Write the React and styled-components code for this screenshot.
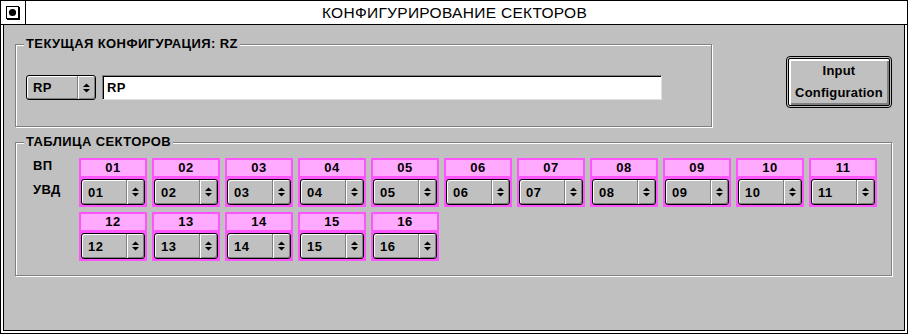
import styled, { createGlobalStyle } from "styled-components";

const GlobalStyle = createGlobalStyle`
    html, body {
        margin: 0;
        padding: 0;
        background: #c0c0c0;
    }
    * {
        box-sizing: border-box;
    }
`

const Window = styled.div`
    width: 908px;
    height: 334px;
    border: 1px solid #000;
    background: #fff;
    display: flex;
    flex-direction: column;
    font-family: "Liberation Sans", Arial, sans-serif;
    color: #000;
`
const TitleBar = styled.div`
    height: 24px;
    flex: none;
    display: flex;
    border-bottom: 1px solid #000;
    background: #fff;
`
const CloseBox = styled.div`
    width: 25px;
    border-right: 1px solid #000;
    display: flex;
    align-items: center;
    justify-content: center;
    padding-right: 1px;
`
const Title = styled.div`
    flex: 1;
    text-align: center;
    font-size: 15.5px;
    letter-spacing: 0.3px;
    line-height: 23px;
    padding-right: 24px;
`
const Frame = styled.div`
    flex: 1;
    border: 2px solid #fff;
    border-top: none;
    display: flex;
`
const Body = styled.div`
    flex: 1;
    border: 1px solid #000;
    border-top: none;
    background: #c0c0c0;
    padding: 19px 12px 0 11px;
`
const TopRow = styled.div`
    display: flex;
    justify-content: space-between;
    align-items: flex-start;
`
const Group = styled.div`
    position: relative;
    width: ${p => p.$w}px;
    height: ${p => p.$h}px;
    margin-top: ${p => p.$top || 0}px;
    border: 1px solid #808080;
    box-shadow: inset 1px 1px 0 #fff, 1px 1px 0 #fff;
    padding: ${p => p.$pad};
`
const Legend = styled.span`
    position: absolute;
    left: 8px;
    top: -9px;
    padding: 0 2px;
    background: #c0c0c0;
    font-size: 13px;
    font-weight: bold;
    letter-spacing: 0.4px;
    line-height: 16px;
`
const ConfigRow = styled.div`
    display: flex;
    gap: 6px;
`
const Spinner = styled.div`
    width: ${p => p.$w}px;
    height: ${p => p.$h}px;
    display: flex;
    border: 1px solid #000;
    border-radius: 3px;
    background: #c0c0c0;
    box-shadow: inset 1px 1px 0 #fff, inset -1px -1px 0 #808080;
    overflow: hidden;
`
const SpinValue = styled.div`
    flex: 1;
    display: flex;
    align-items: center;
    padding-left: ${p => p.$pad || 5}px;
    font-size: 13px;
    font-weight: bold;
    letter-spacing: 0.4px;
`
const SpinArrows = styled.div`
    width: 18px;
    display: flex;
    align-items: center;
    justify-content: center;
    border-left: 1px solid #808080;
    box-shadow: inset 1px 0 0 #fff, inset -1px -1px 0 #808080;
`
const TextField = styled.div`
    width: 560px;
    height: 25px;
    background: #fff;
    border: 1px solid;
    border-color: #808080 #dfdfdf #dfdfdf #808080;
    box-shadow: inset 1px 1px 0 #000;
    padding-left: 4px;
    display: flex;
    align-items: center;
    font-size: 13px;
    font-weight: bold;
    letter-spacing: 0.4px;
`
const ButtonOuter = styled.div`
    width: 106px;
    height: 52px;
    margin-top: 12px;
    border: 1px solid #000;
    border-radius: 4px;
    padding: 1px;
    background: #c0c0c0;
    display: flex;
`
const ButtonFace = styled.div`
    flex: 1;
    border: 1px solid #000;
    border-radius: 2px;
    box-shadow: inset 2px 2px 0 #fff, inset -2px -2px 0 #808080;
    display: flex;
    flex-direction: column;
    align-items: center;
    justify-content: center;
    font-size: 13px;
    font-weight: bold;
    letter-spacing: 0.2px;
    line-height: 22px;
    padding-bottom: 1px;
`
const TableBody = styled.div`
    display: flex;
`
const Labels = styled.div`
    width: 46px;
    display: flex;
    flex-direction: column;
    font-size: 13px;
    font-weight: bold;
    letter-spacing: 0.4px;
    line-height: 16px;
`
const RowLabel = styled.div`
    margin-top: ${p => p.$top || 0}px;
`
const Grid = styled.div`
    display: grid;
    grid-template-columns: repeat(11, 68px);
    gap: 5px;
`
const Cell = styled.div`
    height: 49px;
    background: #ff55ff;
    padding: 2px;
    display: flex;
    flex-direction: column;
    gap: 3px;
`
const CellHead = styled.div`
    height: 16px;
    background: #ffaaff;
    text-align: center;
    font-size: 13px;
    font-weight: bold;
    letter-spacing: 0.4px;
    line-height: 16px;
`

const Arrows = () => (
    <svg width="7" height="10" viewBox="0 0 7 10">
        <polygon points="0,4 3.5,0.5 7,4" fill="#000" />
        <polygon points="0,6 3.5,9.5 7,6" fill="#000" />
    </svg>
)

const Select = ({ value, w, h, pad }) => (
    <Spinner $w={w} $h={h}>
        <SpinValue $pad={pad}>{value}</SpinValue>
        <SpinArrows><Arrows /></SpinArrows>
    </Spinner>
)

const sectors = Array.from({ length: 16 }, (_, i) => String(i + 1).padStart(2, "0"));

const App = () => {
    return (
        <>
            <GlobalStyle />
            <Window>
                <TitleBar>
                    <CloseBox>
                        <svg width="14" height="14" viewBox="0 0 14 14">
                            <rect x="0.5" y="0.5" width="12" height="12" fill="#fff" stroke="#000" />
                            <path d="M13.5 1v13M1 13.5h13" stroke="#000" />
                            <circle cx="6.5" cy="6.5" r="3.6" fill="#000" />
                        </svg>
                    </CloseBox>
                    <Title>КОНФИГУРИРОВАНИЕ СЕКТОРОВ</Title>
                </TitleBar>
                <Frame>
                    <Body>
                        <TopRow>
                            <Group $w={697} $h={83} $pad="30px 0 0 10px">
                                <Legend>ТЕКУЩАЯ КОНФИГУРАЦИЯ: RZ</Legend>
                                <ConfigRow>
                                    <Select value="RP" w={70} h={25} pad={6} />
                                    <TextField>RP</TextField>
                                </ConfigRow>
                            </Group>
                            <ButtonOuter>
                                <ButtonFace>
                                    <span>Input</span>
                                    <span>Configuration</span>
                                </ButtonFace>
                            </ButtonOuter>
                        </TopRow>
                        <Group $w={877} $h={134} $top={15} $pad="15px 0 0 17px">
                            <Legend>ТАБЛИЦА СЕКТОРОВ</Legend>
                            <TableBody>
                                <Labels>
                                    <RowLabel>ВП</RowLabel>
                                    <RowLabel $top={8}>УВД</RowLabel>
                                </Labels>
                                <Grid>
                                    {sectors.map(s => (
                                        <Cell key={s}>
                                            <CellHead>{s}</CellHead>
                                            <Select value={s} w={64} h={26} pad={6} />
                                        </Cell>
                                    ))}
                                </Grid>
                            </TableBody>
                        </Group>
                    </Body>
                </Frame>
            </Window>
        </>
    );
};

export default App;
